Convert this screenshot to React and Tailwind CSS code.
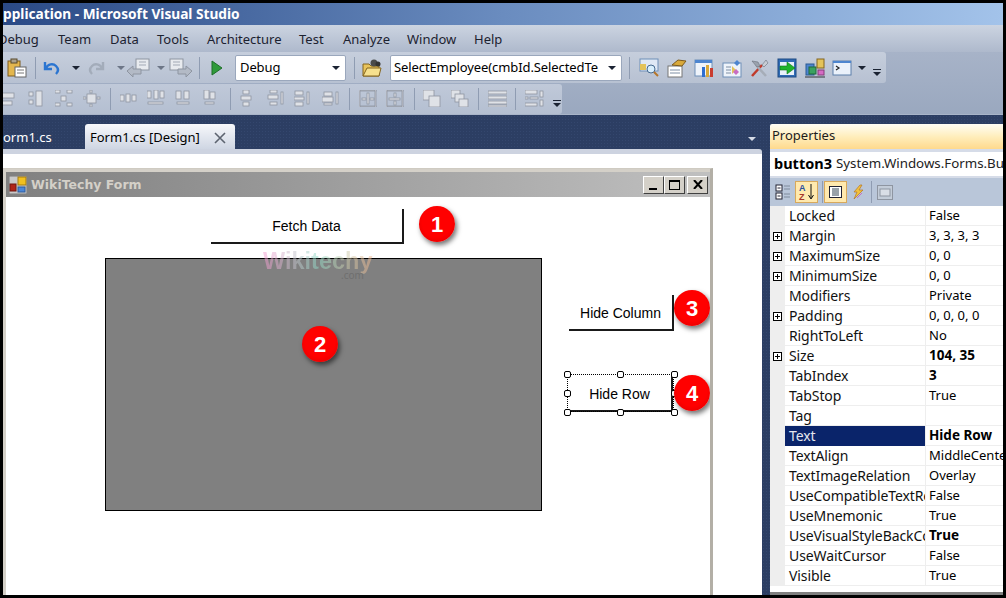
const menus = [
  ["Debug", "w-[60px] -ml-[5px]"],
  ["Team", "w-[52px]"],
  ["Data", "w-[47px]"],
  ["Tools", "w-[50px]"],
  ["Architecture", "w-[92px]"],
  ["Test", "w-[44px]"],
  ["Analyze", "w-[64px]"],
  ["Window", "w-[67px]"],
  ["Help", "w-[40px]"],
];

const props = [
  ["Locked", "False"],
  ["Margin", "3, 3, 3, 3", true],
  ["MaximumSize", "0, 0", true],
  ["MinimumSize", "0, 0", true],
  ["Modifiers", "Private"],
  ["Padding", "0, 0, 0, 0", true],
  ["RightToLeft", "No"],
  ["Size", "104, 35", true, true],
  ["TabIndex", "3", false, true],
  ["TabStop", "True"],
  ["Tag", ""],
  ["Text", "Hide Row", false, true, true],
  ["TextAlign", "MiddleCenter"],
  ["TextImageRelation", "Overlay"],
  ["UseCompatibleTextRendering", "False"],
  ["UseMnemonic", "True"],
  ["UseVisualStyleBackColor", "True", false, true],
  ["UseWaitCursor", "False"],
  ["Visible", "True"],
];

// grey layout glyphs for the second toolbar, one list of rects per icon
const grayIcons = [
  { r: [[0, 3, 14, 5], [2, 11, 10, 4]] },
  { r: [[1, 2, 4, 4], [1, 10, 4, 4], [8, 1, 6, 15]] },
  { r: [[0, 0, 5, 3], [12, 0, 5, 3], [0, 13, 5, 3], [12, 13, 5, 3], [6, 6, 5, 5]] },
  { r: [[4, 4, 9, 9], [0, 7, 3, 2], [14, 7, 3, 2], [7, 0, 2, 3], [7, 14, 2, 3]] },
  { sep: true },
  { r: [[0, 5, 4, 6], [6, 4, 4, 8], [12, 5, 4, 6]] },
  { r: [[0, 1, 4, 7], [7, 0, 4, 9], [13, 1, 4, 7], [1, 12, 15, 2]] },
  { r: [[1, 1, 5, 8], [9, 1, 5, 8], [2, 12, 12, 2]] },
  { r: [[2, 0, 5, 9], [8, 2, 5, 7], [3, 12, 9, 2]] },
  { sep: true },
  { r: [[4, 0, 6, 4], [2, 6, 10, 4], [4, 12, 6, 4]] },
  { r: [[3, 0, 7, 3], [1, 5, 10, 4], [3, 12, 7, 3], [14, 2, 2, 12]] },
  { r: [[1, 1, 8, 4], [0, 7, 10, 3], [1, 12, 8, 4], [13, 2, 2, 12]] },
  { r: [[2, 2, 8, 4], [0, 7, 11, 5], [2, 13, 8, 2], [14, 2, 2, 12]] },
  { sep: true },
  { r: [[0, 0, 17, 1], [0, 16, 17, 1], [0, 0, 1, 17], [16, 0, 1, 17], [8, 3, 2, 11], [3, 8, 4, 2], [11, 8, 4, 2]] },
  { r: [[0, 0, 17, 1], [0, 16, 17, 1], [0, 0, 1, 17], [16, 0, 1, 17], [3, 8, 11, 2], [8, 3, 2, 4], [8, 11, 2, 4]] },
  { sep: true },
  { r: [[0, 0, 11, 10], [6, 6, 11, 11]] },
  { r: [[0, 0, 9, 8], [4, 4, 9, 8], [8, 9, 9, 8]] },
  { sep: true },
  { r: [[0, 1, 19, 3], [0, 6, 19, 3], [0, 11, 19, 3], [0, 15, 19, 2]] },
  { sep: true },
  { r: [[0, 0, 12, 4], [0, 7, 3, 2], [5, 7, 8, 2], [0, 13, 12, 3], [15, 1, 3, 6], [15, 10, 3, 6]] },
];

function Sep({ className = "" }) {
  return <div className={`w-px h-[22px] bg-[#8f9cb2] shrink-0 ${className}`} />;
}

function DropArrow({ className = "", color = "#1b2333" }) {
  return (
    <svg width="8" height="4" viewBox="0 0 8 4" className={`shrink-0 ${className}`}>
      <path d="M0 0h8L4 4z" fill={color} />
    </svg>
  );
}

function Chevron() {
  return (
    <div className="flex flex-col items-center gap-[2px] w-[10px] pt-[10px]">
      <div className="w-2 h-px bg-[#1b2333]" />
      <DropArrow />
    </div>
  );
}

function Gray({ rects }) {
  return (
    <svg width="19" height="17" viewBox="0 0 19 17" className="shrink-0">
      {rects.map((r, i) => (
        <rect key={i} x={r[0]} y={r[1]} width={r[2]} height={r[3]} fill="#dfe2e7" stroke="#8e95a1" strokeWidth="0.8" />
      ))}
    </svg>
  );
}

function Paste() {
  return (
    <svg width="20" height="20" viewBox="0 0 20 20" className="shrink-0">
      <rect x="1" y="3" width="12" height="15" fill="#e3b64d" stroke="#7d5a1c" />
      <rect x="4" y="1" width="6" height="4" fill="#a9a08c" stroke="#5a4a2a" />
      <rect x="8" y="9" width="11" height="10" fill="#fff" stroke="#666" />
      <path d="M10 12h7M10 15h7" stroke="#777" />
    </svg>
  );
}

function Undo({ gray }) {
  const c = gray ? "#a3acba" : "#2b75d1";
  return (
    <svg width="17" height="17" viewBox="0 0 17 17" className="shrink-0">
      {gray ? (
        <path d="M15 3v7H8M14 9C12 5 7 4 4 7s-2 6 0 8" fill="none" stroke={c} strokeWidth="2.4" />
      ) : (
        <path d="M2 3v7h7M3 9c2-4 7-5 10-2s2 6 0 8" fill="none" stroke={c} strokeWidth="2.4" />
      )}
    </svg>
  );
}

function NavIcon({ flip }) {
  return (
    <svg width="26" height="20" viewBox="0 0 26 20" className={`shrink-0 ${flip ? "-scale-x-100" : ""}`}>
      <rect x="10" y="1" width="13" height="11" fill="#e8ebef" stroke="#8e95a1" />
      <path d="M13 4h7M13 7h7" stroke="#a2a9b5" />
      <path d="M1 13l6-5v3h8v5H7v3z" fill="#b3bac6" stroke="#8e95a1" />
    </svg>
  );
}

function FolderGear() {
  return (
    <svg width="20" height="20" viewBox="0 0 20 20" className="shrink-0">
      <path d="M1 18V6h6l2 2h8v10z" fill="#e9c45c" stroke="#84651f" />
      <path d="M1 18l4-8h14l-2 8z" fill="#f6e08e" stroke="#84651f" />
      <circle cx="12" cy="5" r="3.5" fill="#4a4a4a" />
      <circle cx="16" cy="6" r="2.5" fill="#333" />
    </svg>
  );
}

function ToolIcon({ children }) {
  return (
    <svg width="20" height="20" viewBox="0 0 20 20" className="shrink-0">
      {children}
    </svg>
  );
}

function Combo({ text, className }) {
  return (
    <div className={`h-[26px] bg-white border border-[#9aa7bc] rounded-[2px] flex items-center justify-between pr-[5px] shrink-0 ${className}`}>
      <span className="text-[13px] tracking-[-0.1px] text-black whitespace-nowrap">{text}</span>
      <DropArrow />
    </div>
  );
}

function TopToolbar() {
  return (
    <div className="h-[31px] w-[883px] pt-px bg-gradient-to-b from-[#c6cedc] to-[#b7c1d2] rounded-r-[3px] flex items-center">
      <div className="w-[4px] shrink-0" />
      <Paste />
      <Sep className="ml-[8px]" />
      <div className="ml-[7px]"><Undo /></div>
      <DropArrow className="ml-[12px]" />
      <div className="ml-[8px]"><Undo gray /></div>
      <DropArrow className="ml-[12px]" color="#6d7687" />
      <div className="ml-[1px]"><NavIcon /></div>
      <DropArrow className="ml-[5px]" color="#6d7687" />
      <div className="ml-[2px]"><NavIcon flip /></div>
      <Sep className="ml-[6px]" />
      <svg width="12" height="16" viewBox="0 0 12 16" className="ml-[11px] shrink-0">
        <path d="M1 1l10 7-10 7z" fill="#2f9a3a" stroke="#1e6e29" />
      </svg>
      <Combo text="Debug" className="w-[111px] ml-[12px] pl-[4px]" />
      <Sep className="ml-[8px]" />
      <div className="ml-[7px]"><FolderGear /></div>
      <Combo text="SelectEmployee(cmbId.SelectedTe" className="w-[232px] ml-[8px] pl-[3px]" />
      <Sep className="ml-[7px]" />
      <div className="flex items-center gap-[7.6px] ml-[9px]">
        <ToolIcon>
          <rect x="1" y="1" width="18" height="12" fill="#dfe8f5" stroke="#6f8fb8" />
          <path d="M1 6h6v6H1z" fill="#e3c35a" />
          <circle cx="12" cy="11" r="4" fill="#d8eefc" stroke="#46698f" />
          <path d="M15 14l4 4" stroke="#b5762a" strokeWidth="2" />
        </ToolIcon>
        <ToolIcon>
          <rect x="1" y="8" width="14" height="11" fill="#fff" stroke="#777" />
          <path d="M3 12h10M3 15h10" stroke="#7f8fa5" />
          <path d="M5 7l6-5 8 1-4 5z" fill="#d9a93a" stroke="#7d5a1c" />
        </ToolIcon>
        <ToolIcon>
          <rect x="1" y="2" width="17" height="16" fill="#eef3fa" stroke="#6f8fb8" />
          <rect x="1" y="2" width="17" height="3" fill="#4d85cf" />
          <rect x="8" y="9" width="3" height="10" fill="#2f6fd0" />
          <rect x="12" y="7" width="3" height="12" fill="#d9a93a" />
          <rect x="16" y="10" width="3" height="9" fill="#c93c30" />
        </ToolIcon>
        <ToolIcon>
          <rect x="1" y="5" width="18" height="14" fill="#eef3fa" stroke="#6f8fb8" />
          <path d="M4 9h5M4 12h5M4 15h5" stroke="#7f8fa5" />
          <path d="M10 8l4 4-4 4z" fill="#e3c35a" />
          <path d="M15 2l3 3-3 3-3-3z" fill="#4d85cf" />
          <path d="M14 11l3 3-3 3-3-3z" fill="#c86dc2" />
        </ToolIcon>
        <ToolIcon>
          <path d="M3 18L13 7" stroke="#c03a2b" strokeWidth="2.5" />
          <path d="M17 18L7 7" stroke="#a6adb8" strokeWidth="2.5" />
          <path d="M3 3l6 1 2 4-3 1z" fill="#9aa2ae" stroke="#6a717c" strokeWidth="0.6" />
          <path d="M17 2l2 3-4 4-2-2z" fill="#c7ccd4" stroke="#6a717c" strokeWidth="0.6" />
        </ToolIcon>
        <ToolIcon>
          <rect x="1" y="1" width="18" height="18" fill="#2f6bb5" stroke="#1e4a82" />
          <rect x="3" y="4" width="14" height="13" fill="#e8f0fa" />
          <path d="M3 8h7V4l8 6-8 6v-4H3z" fill="#1fb32c" stroke="#11751a" strokeWidth="0.6" />
        </ToolIcon>
        <ToolIcon>
          <rect x="1" y="6" width="8" height="11" fill="#4d85cf" stroke="#2b5a94" />
          <rect x="4" y="9" width="7" height="7" fill="#3aa260" stroke="#23683b" />
          <rect x="12" y="1" width="7" height="9" fill="#e3c35a" stroke="#84651f" />
          <rect x="13" y="12" width="6" height="5" fill="#d56bc4" stroke="#863d7b" />
          <rect x="0" y="18" width="20" height="2" fill="#757b85" />
        </ToolIcon>
        <ToolIcon>
          <rect x="1" y="3" width="18" height="14" fill="#eaf1fb" stroke="#5c7faa" />
          <rect x="1" y="3" width="18" height="2" fill="#4d85cf" />
          <path d="M4 8l3 2-3 2" fill="none" stroke="#222" strokeWidth="1.2" />
        </ToolIcon>
      </div>
      <DropArrow className="ml-[6px]" />
      <div className="ml-[6px]"><Chevron /></div>
    </div>
  );
}

function BottomToolbar() {
  return (
    <div className="h-[31px] w-[559px] bg-gradient-to-b from-[#c0c9d9] to-[#b4bfd1] rounded-r-[3px] flex items-center overflow-hidden">
      <div className="flex items-center gap-[8.5px] -ml-[3px]">
        {grayIcons.map((g, i) =>
          g.sep ? <Sep key={i} /> : <Gray key={i} rects={g.r} />
        )}
      </div>
      <div className="ml-[8px]"><Chevron /></div>
    </div>
  );
}

function DesignerButton({ children, className }) {
  return (
    <div className={`absolute bg-white border-r-2 border-b-2 border-[#1a1a1a] pt-[2px] flex items-center justify-center text-[14px] text-black font-['Liberation_Sans'] ${className}`}>
      {children}
    </div>
  );
}

function Badge({ n, className }) {
  return (
    <div className={`absolute w-[36px] h-[36px] rounded-full bg-[radial-gradient(circle_at_50%_45%,#ff0000_55%,#d80000_100%)] shadow-[2px_3px_5px_rgba(0,0,0,0.55)] flex items-center justify-center text-white text-[22px] font-bold font-['Liberation_Sans'] ${className}`}>
      {n}
    </div>
  );
}

function Handle({ className }) {
  return <div className={`absolute w-[7px] h-[7px] bg-white border border-black rounded-[2px] ${className}`} />;
}

function WinButton({ children, className = "" }) {
  return (
    <div className={`w-[21px] h-[18px] bg-[#d4d0c8] border-t border-l border-white border-r border-b border-r-[#404040] border-b-[#404040] flex items-center justify-center ${className}`}>
      {children}
    </div>
  );
}

function FormWindow() {
  return (
    <div className="w-[710px] flex-1 min-h-0 bg-[#d4d0c8] border-r-[3px] border-r-[#b3afa6] pl-[3px] pt-[3px] flex flex-col border-t border-t-[#cfcbc2]">
      <div className="h-[25px] shrink-0 bg-gradient-to-r from-[#808080] to-[#c0c0c0] flex items-center pl-[3px] pr-[2px]">
        <svg width="18" height="18" viewBox="0 0 18 18" className="shrink-0">
          <rect x="0" y="0" width="18" height="18" fill="#c9c9c9" stroke="#777" />
          <rect x="9" y="1" width="8" height="8" fill="#f0c020" stroke="#a57c10" />
          <rect x="1" y="8" width="6" height="7" fill="#b02418" stroke="#701710" />
          <rect x="9" y="11" width="7" height="5" fill="#4a86d8" stroke="#2c5a9a" />
        </svg>
        <span className="ml-[4px] pt-px text-[12.5px] font-bold text-[#d4d0c8] flex-1 font-['DejaVu_Sans']">
          WikiTechy Form
        </span>
        <div className="flex items-center">
          <WinButton>
            <div className="w-[8px] h-[2px] bg-black mt-[9px] mr-[2px]" />
          </WinButton>
          <WinButton>
            <div className="w-[11px] h-[10px] border border-black border-t-2" />
          </WinButton>
          <WinButton className="ml-[2px]">
            <svg width="10" height="9" viewBox="0 0 10 9">
              <path d="M1 0l8 9M9 0L1 9" stroke="#000" strokeWidth="2" />
            </svg>
          </WinButton>
        </div>
      </div>
      <div className="relative flex-1 bg-white overflow-hidden">
        <DesignerButton className="left-[205px] top-[12px] w-[193px] h-[35px]">Fetch Data</DesignerButton>
        <div className="absolute left-[99px] top-[61px] w-[437px] h-[253px] bg-[#808080] border border-black" />
        <DesignerButton className="left-[563px] top-[98px] w-[105px] h-[36px]">Hide Column</DesignerButton>
        <DesignerButton className="left-[562px] top-[179px] w-[105px] h-[36px]">Hide Row</DesignerButton>
        <div className="absolute left-[561px] top-[177px] w-[107px] h-[38px] border border-dotted border-black" />
        <Handle className="left-[558px] top-[174px]" />
        <Handle className="left-[611px] top-[174px]" />
        <Handle className="left-[665px] top-[174px]" />
        <Handle className="left-[558px] top-[193px]" />
        <Handle className="left-[665px] top-[193px]" />
        <Handle className="left-[558px] top-[212px]" />
        <Handle className="left-[611px] top-[212px]" />
        <Handle className="left-[665px] top-[212px]" />
        <div className="absolute left-[257px] top-[47px] opacity-50 text-[23.5px] leading-[34px] font-bold font-['Liberation_Sans'] bg-gradient-to-r from-[#f49ad0] via-[#8fdcc8] to-[#f4b890] bg-clip-text text-transparent">
          Wikitechy
        </div>
        <div className="absolute left-[335px] top-[71px] text-[10px] text-[#6f6f6f]">.com</div>
        <Badge n="1" className="left-[413px] top-[9px]" />
        <Badge n="2" className="left-[296px] top-[129px]" />
        <Badge n="3" className="left-[668px] top-[93px]" />
        <Badge n="4" className="left-[668px] top-[178px]" />
      </div>
    </div>
  );
}

function PropRow({ name, value, expand, bold, selected }) {
  return (
    <div className="flex h-[20px] shrink-0">
      <div className="w-[15px] shrink-0 flex items-center justify-center">
        {expand && (
          <svg width="9" height="9" viewBox="0 0 9 9">
            <rect x="0.5" y="0.5" width="8" height="8" fill="#fff" stroke="#000" />
            <path d="M2 4.5h5M4.5 2v5" stroke="#000" />
          </svg>
        )}
      </div>
      <div className={`w-[140px] shrink-0 pl-[4px] flex items-center text-[14px] tracking-[-0.1px] overflow-hidden whitespace-nowrap border-b ${selected ? "bg-[#0a246a] text-[#e4e6ee] border-[#0a246a]" : "bg-white text-[#111] border-[#eeeeee]"}`}>
        {name}
      </div>
      <div className={`flex-1 min-w-0 pl-[3px] flex items-center bg-white text-black border-b border-l border-[#eeeeee] overflow-hidden whitespace-nowrap ${bold ? "font-bold text-[13.5px]" : "text-[13px]"}`}>
        {value}
      </div>
    </div>
  );
}

function Properties() {
  return (
    <div className="flex-1 mt-[9px] flex flex-col min-w-0 overflow-hidden rounded-tl-[2px]">
      <div className="h-[25px] shrink-0 bg-gradient-to-b from-[#fffdf5] via-[#ffeebc] to-[#ffd98c] flex items-center pl-[2px] pb-[2px] text-[13px] text-[#1c1c1c]">
        Properties
      </div>
      <div className="bg-[#d6dce8] shrink-0 pt-[3px] pb-[2px]">
        <div className="h-[24px] bg-white flex items-center pl-[4px] whitespace-nowrap overflow-hidden text-black">
          <span className="font-bold text-[14.5px]">button3</span>
          <span className="ml-[4px] text-[13.3px] text-[#222]">System.Windows.Forms.Bu</span>
        </div>
      </div>
      <div className="h-[28px] shrink-0 bg-[#b9c6d9] flex items-center pl-[5px]">
        <svg width="16" height="16" viewBox="0 0 16 16" className="shrink-0">
          <rect x="1" y="1" width="6" height="6" fill="#fff" stroke="#223" />
          <rect x="1" y="9" width="6" height="6" fill="#fff" stroke="#223" />
          <path d="M2.5 4h3M2.5 12h3" stroke="#223" />
          <path d="M9 2h6M9 5h6M9 10h6M9 13h6" stroke="#7f8b9c" />
        </svg>
        <div className="ml-[4px] w-[23px] h-[22px] bg-[#ffe9ae] border border-[#d8a95c] flex items-center justify-center">
          <svg width="18" height="18" viewBox="0 0 18 18">
            <text x="1" y="8" fontSize="9" fontWeight="bold" fill="#2b4f9c" fontFamily="Liberation Sans">A</text>
            <text x="1" y="17" fontSize="9" fontWeight="bold" fill="#a6372a" fontFamily="Liberation Sans">Z</text>
            <path d="M13 1v14M10.5 12l2.5 4 2.5-4" fill="none" stroke="#111" />
          </svg>
        </div>
        <div className="w-px h-[22px] bg-[#8f9cb2] ml-[4px]" />
        <div className="ml-[1px] w-[23px] h-[22px] bg-[#ffe9ae] border border-[#d8a95c] flex items-center justify-center">
          <svg width="13" height="12" viewBox="0 0 13 12">
            <rect x="0.5" y="0.5" width="12" height="11" fill="#fff" stroke="#223" />
            <path d="M3 3h7M3 5h7M3 7h7M3 9h7" stroke="#345" />
          </svg>
        </div>
        <svg width="14" height="16" viewBox="0 0 14 16" className="ml-[4px] shrink-0">
          <path d="M9 1L3 8h3L3 15l9-9H8l3-5z" fill="#f3c23c" stroke="#b5762a" strokeWidth="0.7" />
          <path d="M11 9l-5 5" stroke="#c86dc2" />
        </svg>
        <div className="w-px h-[22px] bg-[#8f9cb2] ml-[6px]" />
        <svg width="16" height="15" viewBox="0 0 16 15" className="ml-[5px] shrink-0">
          <rect x="0.5" y="0.5" width="15" height="14" fill="#c3ccd8" stroke="#8e95a1" />
          <rect x="3" y="4" width="10" height="7" fill="#d9dee6" stroke="#8e95a1" />
        </svg>
      </div>
      <div className="flex-1 min-h-0 bg-white flex flex-col border-b-[3px] border-b-[#808080]">
        <div className="bg-[#eeeeee] flex flex-col">
          {props.map((p) => (
            <PropRow key={p[0]} name={p[0]} value={p[1]} expand={p[2]} bold={p[3]} selected={p[4]} />
          ))}
        </div>
      </div>
    </div>
  );
}

export default function App() {
  return (
    <div className="w-[1006px] h-[598px] bg-black p-[3px] overflow-hidden font-['Noto_Sans']">
      <div className="w-[1000px] h-[592px] flex flex-col overflow-hidden">
        <div className="h-[22px] shrink-0 bg-gradient-to-r from-[#2b4a86] via-[#6a8cbf] to-[#a3c3ea] flex items-center text-white font-bold text-[13.7px] whitespace-nowrap">
          pplication - Microsoft Visual Studio
        </div>
        <div className="h-[27px] shrink-0 pt-[2px] bg-gradient-to-b from-[#ccd4e1] to-[#aeb9cc] flex items-center text-[13px] text-[#1c2230] overflow-hidden">
          {menus.map(([label, cls]) => (
            <span key={label} className={`shrink-0 ${cls}`}>{label}</span>
          ))}
        </div>
        <div className="h-[63px] shrink-0 bg-gradient-to-b from-[#a7b3c8] to-[#9aa8bf] flex flex-col gap-px border-b border-[#a9b5c9]">
          <TopToolbar />
          <BottomToolbar />
        </div>
        <div className="flex-1 min-h-0 flex bg-[#2c3e63] bg-[radial-gradient(#34476e_1px,transparent_1px)] bg-[length:3px_3px]">
          <div className="w-[759px] shrink-0 flex flex-col">
            <div className="h-[34px] shrink-0 flex items-end relative">
              <div className="w-[82px] h-[25px] pt-[2px] flex items-center text-[13px] text-white whitespace-nowrap">orm1.cs</div>
              <div className="w-[150px] h-[25px] pt-[2px] bg-gradient-to-b from-[#f7f8fb] to-[#cfd6e3] rounded-t-[3px] flex items-center pl-[5px] text-[13px] text-black whitespace-nowrap">
                Form1.cs [Design]
                <svg width="12" height="12" viewBox="0 0 12 12" className="ml-[14px]">
                  <path d="M1 1l10 10M11 1L1 11" stroke="#5d6470" strokeWidth="1.6" />
                </svg>
              </div>
              <DropArrow className="absolute right-[6px] bottom-[8px]" color="#d5dbe6" />
            </div>
            <div className="flex-1 min-h-0 bg-white border-t-[5px] border-t-[#cdd3e0] rounded-tr-[3px] pt-[14px] flex flex-col">
              <FormWindow />
            </div>
          </div>
          <div className="w-[8px] shrink-0" />
          <Properties />
        </div>
      </div>
    </div>
  );
}
